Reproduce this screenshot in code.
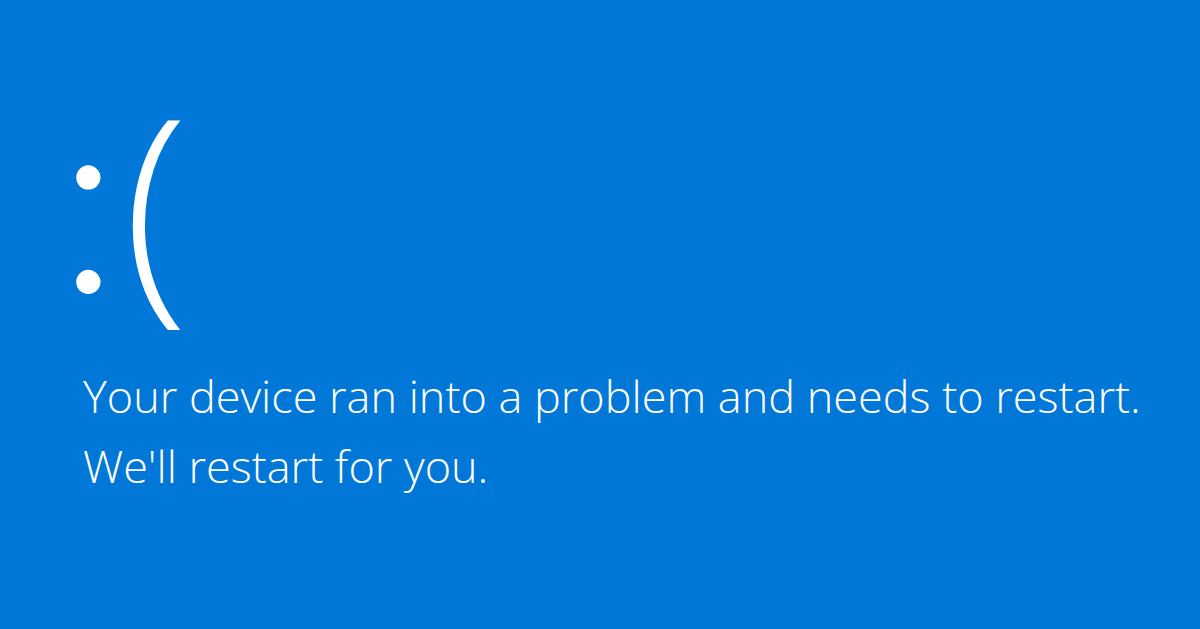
export default function App() {
  return (
    <div className="w-[1200px] h-[629px] overflow-hidden bg-[#0177d7] text-white font-['Open_Sans',sans-serif] font-light">
      <div className="pl-[57px] pt-[79px]">
        <div className="text-[240px] leading-[240px] h-[240px]">
          <span className="font-['Lato',sans-serif] font-light text-[262px] leading-[200px]">:</span>
          <span className="ml-[3px]">(</span>
        </div>
        <div className="mt-[42px] pl-[26px] text-[45px] leading-[70px]">
          <p>Your device ran into a problem and needs to restart.</p>
          <p>We'll restart for you.</p>
        </div>
      </div>
    </div>
  );
}
